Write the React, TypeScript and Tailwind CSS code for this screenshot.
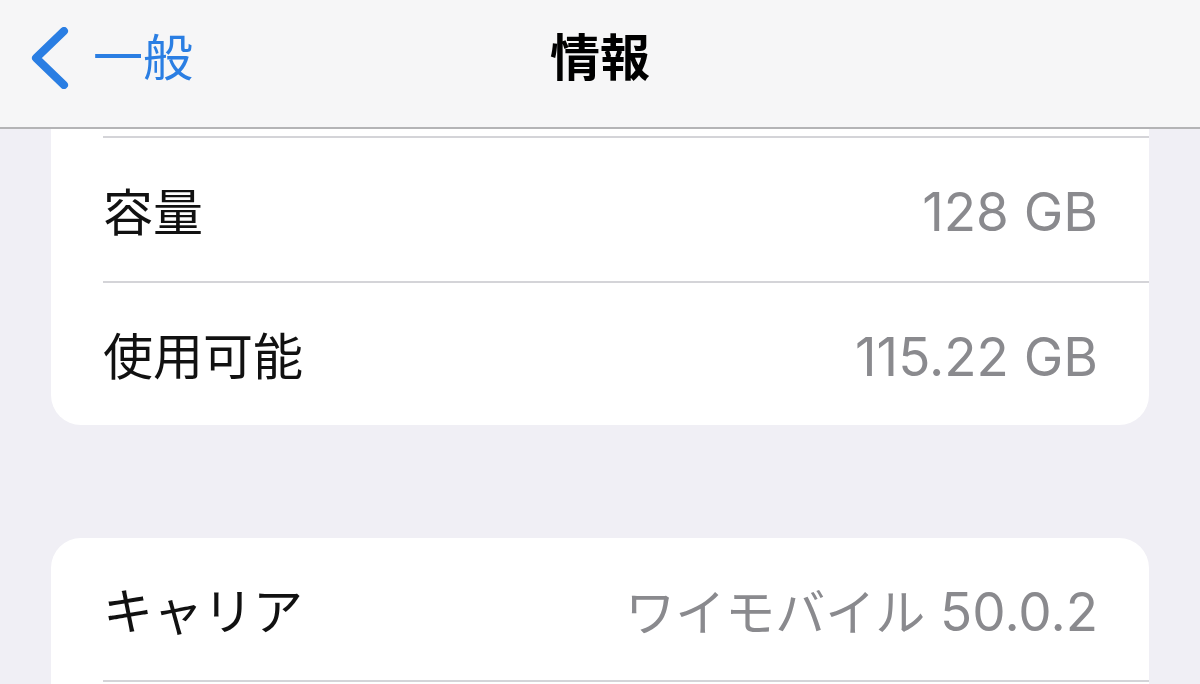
import React from 'react'

const font = { fontFamily: 'Inter, "Noto Sans CJK JP", sans-serif' }

function Row({ label, value, h, last }: { label: string; value: React.ReactNode; h: string; last?: boolean }) {
    return (
        <div className={`flex ${h} items-center justify-between pr-[51px] pt-[6px] ${last ? '' : 'border-b-2 border-[#d4d4d8]'}`}>
            <span className="text-[50px] leading-none text-[#111]">{label}</span>
            <span className="text-[53px] leading-none text-[#8a8a8e]">{value}</span>
        </div>
    )
}

export default function App() {
    return (
        <div className="w-[1200px] h-[684px] overflow-hidden bg-[#f0eff5]" style={font}>
            <header className="relative flex h-[129px] items-center border-b-2 border-[#b4b4b6] bg-[#f6f6f7] pb-[12px]">
                <div className="flex items-center pl-[30px]">
                    <svg width="40" height="62" viewBox="0 0 40 62" fill="none">
                        <path d="M34 4 L6 31 L34 58" stroke="#2a7ee3" strokeWidth="8" strokeLinecap="round" strokeLinejoin="round" />
                    </svg>
                    <span className="ml-[23px] text-[50px] leading-none text-[#2a7ee3]">一般</span>
                </div>
                <h1 className="absolute left-1/2 -translate-x-1/2 text-[50px] font-bold leading-none text-black">情報</h1>
            </header>

            <main className="px-[51px]">
                <section className="rounded-b-[30px] bg-white pl-[52px]">
                    <div className="h-[9px] border-b-2 border-[#d4d4d8]" />
                    <Row h="h-[145px]" label="容量" value="128 GB" />
                    <Row h="h-[142px]" label="使用可能" value="115.22 GB" last />
                </section>

                <section className="mt-[113px] rounded-t-[30px] bg-white pl-[52px]">
                    <Row
                        h="h-[144px]"
                        label="キャリア"
                        value={
                            <>
                                <span className="text-[50px]">ワイモバイル</span> 50.0.2
                            </>
                        }
                    />
                    <div className="h-[40px]" />
                </section>
            </main>
        </div>
    )
}
